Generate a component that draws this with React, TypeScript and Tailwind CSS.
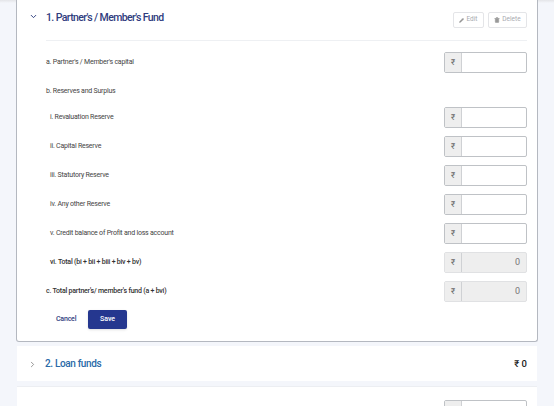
import { ChevronDown, ChevronRight, Pencil, Trash2 } from "lucide-react";

const Amount = ({ disabled = false, value = "", symbol = "₹" }: { disabled?: boolean; value?: string; symbol?: string }) => (
  <div className={`flex h-[21px] w-[83px] rounded-[2px] border ${disabled ? "border-[#e0e1e3] bg-[#eeeeee]" : "border-[#bfc2c6] bg-white"}`}>
    <span className="flex w-[17px] items-center justify-center border-r border-[#cfd1d4] bg-[#eeeeee] text-[8px] text-[#666]">{symbol}</span>
    <span className="flex flex-1 items-center justify-end pr-[6px] text-[9px] text-[#777]">{value}</span>
  </div>
);

const rows = [
  { label: "a. Partner's / Member's capital", indent: false, input: true, h: "h-[29px]" },
  { label: "b. Reserves and Surplus", indent: false, input: false, h: "h-[26px]" },
  { label: "i. Revaluation Reserve", indent: true, input: true, h: "h-[29px]" },
  { label: "ii. Capital Reserve", indent: true, input: true, h: "h-[29px]" },
  { label: "iii. Statutory Reserve", indent: true, input: true, h: "h-[29px]" },
  { label: "iv. Any other Reserve", indent: true, input: true, h: "h-[29px]" },
  { label: "v. Credit balance of Profit and loss account", indent: true, input: true, h: "h-[29px]" },
];

export default function App() {
  return (
    <div className="h-[406px] w-[554px] overflow-hidden bg-[#f4f6fb] font-['Roboto',sans-serif]">
      <div className="h-[3px] bg-gradient-to-b from-[#e4e5e8] to-[#f4f6fb]" />
      <div className="mx-[16px] -mt-[3px] flex h-[342px] w-[522px] flex-col rounded-b-[3px] border-x border-b border-[#b4b8c0] bg-white pl-[12px] pr-[10px]">
        <div className="flex h-[40px] items-start">
          <ChevronDown className="mt-[12px] h-[9px] w-[9px] text-[#2a3a7c]" strokeWidth={2.5} />
          <h2 className="ml-[8px] mt-[10px] text-[10.5px] font-medium leading-[16px] tracking-[-0.6px] text-[#2f3c7e]">1. Partner's / Member's Fund</h2>
          <div className="ml-auto mt-[12px] flex gap-[4px]">
            <button className="flex h-[16px] w-[31px] items-center justify-center gap-[2px] rounded-[2px] border border-[#e4e5e8] text-[6.5px] text-[#a8aab0]">
              <Pencil className="h-[5px] w-[5px] fill-[#999] text-[#999]" />Edit
            </button>
            <button className="flex h-[16px] w-[39px] items-center justify-center gap-[2px] rounded-[2px] border border-[#e4e5e8] text-[6.5px] text-[#a8aab0]">
              <Trash2 className="h-[6px] w-[6px] fill-[#999] text-[#999]" />Delete
            </button>
          </div>
        </div>
        <div className="ml-[17px] mb-[11px] h-px bg-[#eef0f3]" />
        {rows.map((r) => (
          <div key={r.label} className={`flex ${r.h} items-start`}>
            <span className={`${r.indent ? "ml-[21px]" : "ml-[17px]"} mt-[5px] text-[7px] leading-[10px] tracking-[-0.22px] text-[#444]`}>{r.label}</span>
            {r.input && (
              <div className="ml-auto">
                <Amount />
              </div>
            )}
          </div>
        ))}
        <div className="flex h-[29px] items-start">
          <span className="ml-[21px] mt-[5px] text-[7px] font-medium leading-[10px] tracking-[-0.22px] text-[#333]">vi. Total (bi + bii + biii + biv + bv)</span>
          <div className="ml-auto"><Amount disabled value="0" /></div>
        </div>
        <div className="flex h-[29px] items-start">
          <span className="ml-[17px] mt-[5px] text-[7px] font-medium leading-[10px] tracking-[-0.22px] text-[#333]">c. Total partner's/ member's fund (a + bvi)</span>
          <div className="ml-auto"><Amount disabled value="0" /></div>
        </div>
        <div className="ml-[27px] flex items-center">
          <button className="w-[20px] text-center text-[7px] font-medium tracking-[-0.2px] text-[#2f3c7e]">Cancel</button>
          <button className="ml-[12px] h-[19px] w-[39px] rounded-[2px] bg-[#25378f] text-[7px] font-medium text-white shadow-sm">Save</button>
        </div>
      </div>
      <div className="mx-[17px] mt-[4px] flex h-[35px] w-[520px] items-center bg-white pl-[11px] pr-[10px] pt-[1px]">
        <ChevronRight className="h-[9px] w-[9px] text-[#777]" strokeWidth={2} />
        <h2 className="ml-[8px] text-[10px] font-medium leading-[16px] tracking-[-0.35px] text-[#2a6aa8]">2. Loan funds</h2>
        <span className="ml-auto text-[9.5px] font-medium text-[#222]">₹ 0</span>
      </div>
      <div className="mx-[17px] mt-[5px] flex h-[30px] justify-end border-t border-[#eceef2] bg-white pr-[10px] pt-[13px]">
        <Amount symbol="" />
      </div>
    </div>
  );
}
